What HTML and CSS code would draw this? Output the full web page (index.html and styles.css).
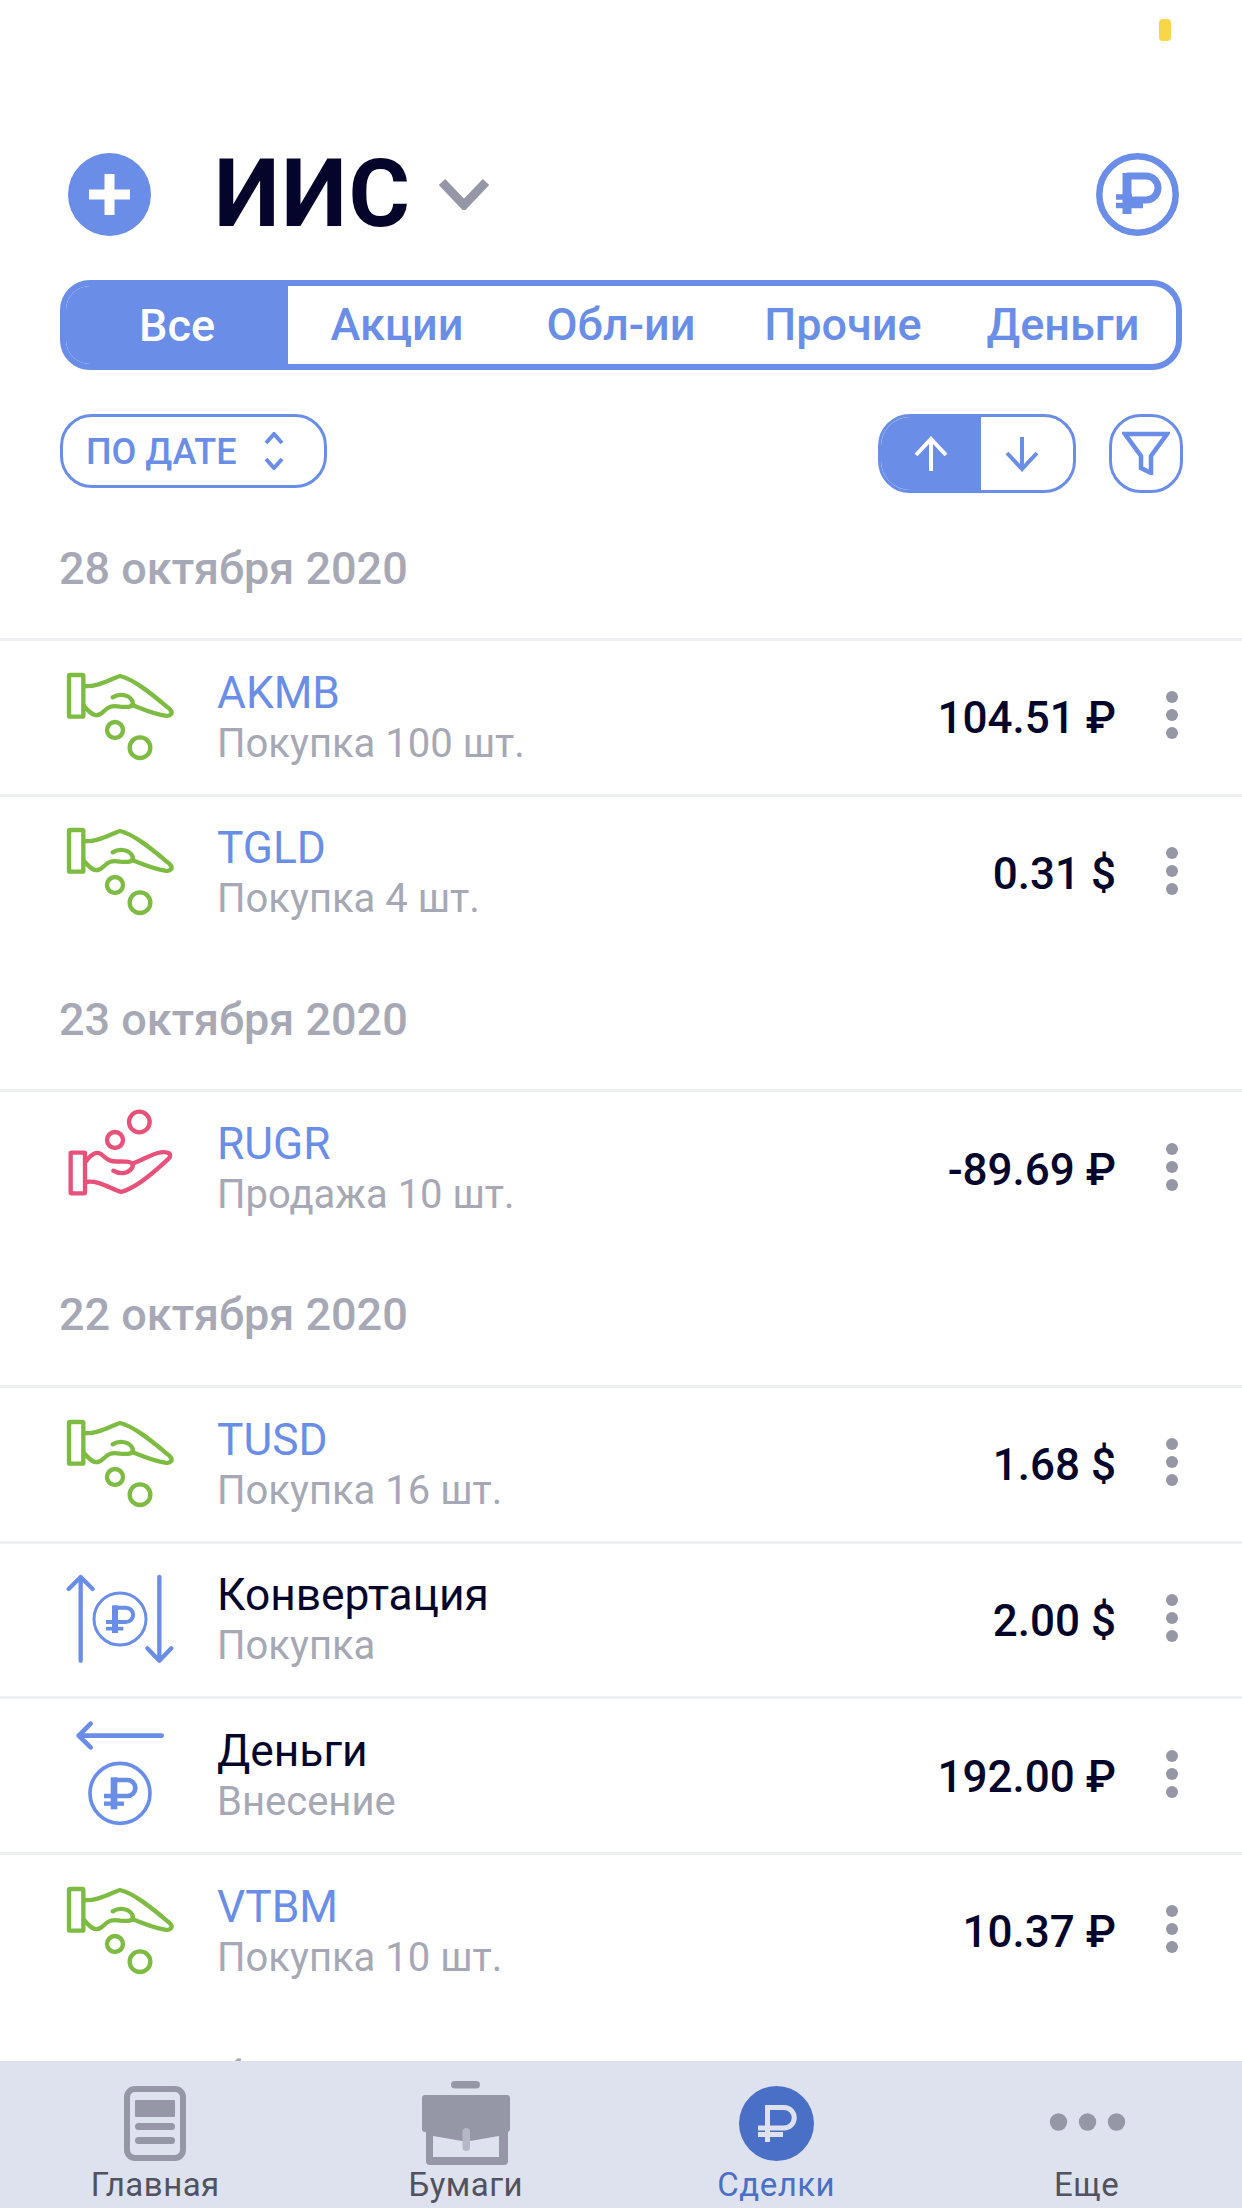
FILE: index.html
```html
<!DOCTYPE html>
<html lang="ru">
<head>
<meta charset="utf-8">
<title>ИИС</title>
<link rel="stylesheet" href="styles.css">
</head>
<body>
<svg class="defs" width="0" height="0" aria-hidden="true">
  <symbol id="hand-buy" viewBox="0 0 480 468">
    <g fill="none" stroke-width="13" stroke-linecap="round" stroke-linejoin="round" transform="translate(0,33)">
      <rect x="87" y="75" width="43" height="125" rx="3"/>
      <path d="M132 108C170 112 205 90 240 78C285 88 350 145 388 176C402 190 392 200 375 197C340 192 310 178 278 166"/>
      <path d="M218 142C240 128 270 135 278 155C282 172 262 172 240 170C215 166 205 170 190 185C170 205 155 195 132 168"/>
      <circle cx="225" cy="240" r="24"/>
      <circle cx="300" cy="293" r="31"/>
    </g>
  </symbol>
  <symbol id="hand-sell" viewBox="0 0 480 468">
    <g fill="none" stroke-width="13" stroke-linecap="round" stroke-linejoin="round">
      <rect x="92" y="188" width="43" height="122" rx="3"/>
      <path d="M138 276C175 270 210 295 243 306C285 296 350 240 386 206C398 192 385 184 362 187C340 190 310 208 280 220"/>
      <path d="M220 242C240 255 270 250 278 230C280 214 262 214 240 214C215 216 205 212 190 198C172 180 155 190 138 214"/>
      <circle cx="225" cy="150" r="24"/>
      <circle cx="298" cy="96" r="31"/>
    </g>
  </symbol>
  <symbol id="convert" viewBox="0 0 480 468">
    <g fill="none" stroke-linecap="round" stroke-linejoin="round" transform="translate(0,54)">
      <path stroke-width="13" d="M122 305V54M86 90L122 54L158 90M358 54V305M322 268L358 305L394 268"/>
      <circle cx="240" cy="180" r="78" stroke-width="9"/>
      <g stroke-linecap="butt" stroke-linejoin="miter">
        <path stroke-width="18" d="M225 222V139"/>
        <path stroke-width="12" d="M225 146H258A21 21 0 0 1 258 189H198"/>
        <path stroke-width="11" d="M198 209H250"/>
      </g>
    </g>
  </symbol>
  <symbol id="money" viewBox="0 0 480 468">
    <g fill="none" stroke-linecap="round" stroke-linejoin="round" transform="translate(0,-411)">
      <path stroke-width="14" d="M365 527H116M152 491L116 527L152 562"/>
      <circle cx="240" cy="700" r="90" stroke-width="11"/>
      <g stroke-linecap="butt" stroke-linejoin="miter">
        <path stroke-width="20" d="M222 748V652"/>
        <path stroke-width="14" d="M222 660H262A24 24 0 0 1 262 708H192"/>
        <path stroke-width="13" d="M192 731H252"/>
      </g>
    </g>
  </symbol>
</svg>

<div class="screen">
  <span class="status-dot"></span>
  <main class="content">
    <header class="header">
      <svg class="head-icon" viewBox="0 0 83 83">
        <circle class="fill-blue" cx="41.5" cy="41.5" r="41.5"/>
        <path class="plus" d="M41.5 21V62M21 41.5H62"/>
      </svg>
      <h1 class="title">ИИС</h1>
      <svg class="title-chevron" viewBox="0 0 50 32"><path d="M3 4L25 27L47 4"/></svg>
      <svg class="head-icon head-right" viewBox="0 0 83 83">
        <circle class="ring" cx="41.5" cy="41.5" r="38.2"/>
        <path class="rub-stem" d="M31 61V20"/>
        <path class="rub-bowl" d="M31 23H50A12 12 0 0 1 50 47H31"/>
        <path class="rub-bars" d="M20 44H36M20 52.5H47"/>
      </svg>
    </header>

    <nav class="tabs">
      <span class="tab tab-active">Все</span>
      <span class="tab">Акции</span>
      <span class="tab">Обл-ии</span>
      <span class="tab">Прочие</span>
      <span class="tab">Деньги</span>
    </nav>

    <div class="toolbar">
      <div class="sort-pill">
        <span class="sort-label">ПО ДАТЕ</span>
        <svg class="sort-icon" viewBox="0 0 20 38"><path d="M2 11L10 2L18 11M2 27L10 36L18 27"/></svg>
      </div>
      <div class="toggle">
        <span class="toggle-seg toggle-on">
          <svg class="arrow" viewBox="0 0 36 36"><path d="M18 35V3M3 19L18 3L33 19"/></svg>
        </span>
        <span class="toggle-seg">
          <svg class="arrow" viewBox="0 0 36 36"><path d="M18 1V33M3 17L18 33L33 17"/></svg>
        </span>
      </div>
      <div class="filter">
        <svg class="filter-icon" viewBox="0 0 48 44"><path d="M3 3H45L29 25V42L19 37V25Z"/></svg>
      </div>
    </div>

    <section>
      <h2 class="date">28 октября 2020</h2>
      <div class="row">
        <svg class="row-icon green"><use href="#hand-buy"/></svg>
        <div class="row-text"><div class="ticker">AKMB</div><div class="sub">Покупка 100 шт.</div></div>
        <div class="amount">104.51 ₽</div>
        <div class="more"><i></i><i></i><i></i></div>
      </div>
      <div class="row">
        <svg class="row-icon green"><use href="#hand-buy"/></svg>
        <div class="row-text"><div class="ticker">TGLD</div><div class="sub">Покупка 4 шт.</div></div>
        <div class="amount">0.31 $</div>
        <div class="more"><i></i><i></i><i></i></div>
      </div>
    </section>

    <section>
      <h2 class="date">23 октября 2020</h2>
      <div class="row">
        <svg class="row-icon pink"><use href="#hand-sell"/></svg>
        <div class="row-text"><div class="ticker">RUGR</div><div class="sub">Продажа 10 шт.</div></div>
        <div class="amount">-89.69 ₽</div>
        <div class="more"><i></i><i></i><i></i></div>
      </div>
    </section>

    <section>
      <h2 class="date">22 октября 2020</h2>
      <div class="row">
        <svg class="row-icon green"><use href="#hand-buy"/></svg>
        <div class="row-text"><div class="ticker">TUSD</div><div class="sub">Покупка 16 шт.</div></div>
        <div class="amount">1.68 $</div>
        <div class="more"><i></i><i></i><i></i></div>
      </div>
      <div class="row">
        <svg class="row-icon blue"><use href="#convert"/></svg>
        <div class="row-text"><div class="ticker ticker-dark">Конвертация</div><div class="sub">Покупка</div></div>
        <div class="amount">2.00 $</div>
        <div class="more"><i></i><i></i><i></i></div>
      </div>
      <div class="row">
        <svg class="row-icon blue"><use href="#money"/></svg>
        <div class="row-text"><div class="ticker ticker-dark">Деньги</div><div class="sub">Внесение</div></div>
        <div class="amount">192.00 ₽</div>
        <div class="more"><i></i><i></i><i></i></div>
      </div>
      <div class="row">
        <svg class="row-icon green"><use href="#hand-buy"/></svg>
        <div class="row-text"><div class="ticker">VTBM</div><div class="sub">Покупка 10 шт.</div></div>
        <div class="amount">10.37 ₽</div>
        <div class="more"><i></i><i></i><i></i></div>
      </div>
    </section>

    <section>
      <h2 class="date">21 октября 2020</h2>
    </section>
  </main>

  <footer class="bottom-nav">
    <div class="nav-item">
      <svg class="nav-icon" viewBox="0 0 100 85">
        <rect class="nav-outline" x="22" y="8" width="56" height="69" rx="8"/>
        <rect class="nav-fill" x="30" y="19" width="40" height="17" rx="1"/>
        <rect class="nav-fill" x="30" y="42" width="40" height="7" rx="3.5"/>
        <rect class="nav-fill" x="30" y="56" width="40" height="7" rx="3.5"/>
      </svg>
      <span class="nav-label">Главная</span>
    </div>
    <div class="nav-item">
      <svg class="nav-icon" viewBox="0 0 100 85">
        <rect class="nav-fill" x="35" y="0" width="29" height="7.5" rx="3.75"/>
        <rect class="nav-fill" x="10" y="30" width="82" height="54" rx="4"/>
        <path class="nav-bg" d="M17 55L46 60V76H17ZM83 55L54 60V76H83ZM46 60H54V76H46Z"/>
        <path class="nav-fill" d="M9 14H91A3 3 0 0 1 94 17V48A3 3 0 0 1 91 51L54 58H46L9 51A3 3 0 0 1 6 48V17A3 3 0 0 1 9 14Z"/>
        <rect class="nav-clasp" x="46.5" y="47" width="7.5" height="23" rx="3.75"/>
      </svg>
      <span class="nav-label">Бумаги</span>
    </div>
    <div class="nav-item nav-item-active">
      <svg class="nav-icon" viewBox="0 0 100 85">
        <circle class="nav-active-fill" cx="50.5" cy="42.5" r="37.5"/>
        <path class="nav-rub" d="M41.5 61V26.5H58A10.25 10.25 0 0 1 58 47H32M32 53.5H57"/>
      </svg>
      <span class="nav-label">Сделки</span>
    </div>
    <div class="nav-item">
      <svg class="nav-icon" viewBox="0 0 100 85">
        <circle class="nav-fill" cx="21.5" cy="41" r="8.7"/>
        <circle class="nav-fill" cx="50.5" cy="41" r="8.7"/>
        <circle class="nav-fill" cx="79.5" cy="41" r="8.7"/>
      </svg>
      <span class="nav-label">Еще</span>
    </div>
  </footer>
</div>
</body>
</html>
```

FILE: styles.css
```css
* { box-sizing: border-box; }

html, body {
  margin: 0;
  padding: 0;
  background: #fff;
}

body {
  font-family: Roboto, "Noto Sans", sans-serif;
  color: #05052b;
}

.defs { position: absolute; }

.screen {
  position: relative;
  width: 1242px;
  height: 2208px;
  display: flex;
  flex-direction: column;
  overflow: hidden;
}

.status-dot {
  position: absolute;
  left: 1159px;
  top: 19px;
  width: 12px;
  height: 22px;
  border-radius: 4px;
  background: #f7d749;
}

.content {
  flex: 1;
  min-height: 0;
  overflow: hidden;
  padding-top: 152px;
}

/* header */
.header {
  display: flex;
  align-items: center;
  height: 84px;
  padding: 0 63px 0 68px;
}

.head-icon { width: 83px; height: 83px; flex: none; }
.head-right { margin-left: auto; }
.fill-blue { fill: #6a8ee8; }
.plus { fill: none; stroke: #fff; stroke-width: 10; }
.ring { fill: none; stroke: #6a8ee8; stroke-width: 6.5; }
.rub-stem { fill: none; stroke: #6a8ee8; stroke-width: 9; }
.rub-bowl { fill: none; stroke: #6a8ee8; stroke-width: 7; }
.rub-bars { fill: none; stroke: #6a8ee8; stroke-width: 5.5; }

.title {
  margin: 0 0 0 63px;
  font-size: 94px;
  line-height: 84px;
  font-weight: 700;
  letter-spacing: 1.5px;
  color: #05052b;
}

.title-chevron {
  width: 50px;
  height: 32px;
  margin-left: 27px;
  flex: none;
}
.title-chevron path { fill: none; stroke: #9697a6; stroke-width: 9; }

/* tabs */
.tabs {
  display: grid;
  grid-template-columns: 222px 218px 230px 214px 226px;
  height: 90px;
  margin: 44px 60px 0;
  width: 1122px;
  border: 6px solid #6a8ee8;
  border-radius: 30px;
  overflow: hidden;
  font-size: 45px;
  font-weight: 500;
  color: #6a8ee8;
}

.tab {
  display: flex;
  align-items: center;
  justify-content: center;
  margin-top: -2px;
}

.tab-active {
  margin: -6px 0 -6px -6px;
  background: #6a8ee8;
  color: #fff;
  padding-top: 0;
  padding-left: 6px;
}

/* toolbar */
.toolbar {
  display: flex;
  align-items: flex-start;
  height: 79px;
  margin-top: 44px;
  padding: 0 59px 0 60px;
}

.sort-pill {
  display: flex;
  align-items: center;
  width: 267px;
  height: 74px;
  padding: 2px 0 0 23px;
  border: 3px solid #6a8ee8;
  border-radius: 32px;
  color: #6a8ee8;
}

.sort-label {
  font-size: 36px;
  font-weight: 500;
  line-height: 1;
}

.sort-icon { width: 20px; height: 38px; margin: -2px 0 0 28px; }
.sort-icon path { fill: none; stroke: #6a8ee8; stroke-width: 4; }

.toggle {
  display: flex;
  width: 198px;
  height: 79px;
  margin-left: auto;
  border: 3px solid #6a8ee8;
  border-radius: 32px;
  overflow: hidden;
}

.toggle-seg {
  display: flex;
  align-items: center;
  justify-content: center;
  width: 92px;
  height: 100%;
  padding-right: 10px;
}

.toggle-on {
  width: 100px;
  padding-right: 0;
  background: #6a8ee8;
  color: #fff;
}

.arrow { width: 36px; height: 36px; }
.arrow path { fill: none; stroke: #6a8ee8; stroke-width: 4; }
.toggle-on .arrow path { stroke: #fff; }

.filter {
  display: flex;
  align-items: center;
  justify-content: center;
  width: 74px;
  height: 79px;
  margin-left: 33px;
  border: 3px solid #6a8ee8;
  border-radius: 32px;
}

.filter-icon { width: 48px; height: 44px; margin-top: -1px; }
.filter-icon path { fill: none; stroke: #6a8ee8; stroke-width: 4.5; }

/* list */
.date {
  display: flex;
  align-items: center;
  height: 140px;
  margin: 0;
  padding: 0 0 0 59px;
  font-size: 45px;
  font-weight: 500;
  color: #a6a8b5;
}

.toolbar + section { margin-top: 5px; }

.row {
  display: flex;
  align-items: center;
  height: 155.67px;
  padding: 0 62px 0 40px;
  border-top: 3px solid #eeeff2;
}

.row-icon {
  width: 160px;
  height: 156px;
  margin-top: -1px;
  flex: none;
}

.green { stroke: #7dbb42; }
.pink { stroke: #e8517a; }
.blue { stroke: #6a8ee8; }

.row-text {
  margin: 2px 0 0 17px;
  flex: 1;
  min-width: 0;
}

.ticker {
  font-size: 44.3px;
  line-height: 50px;
  color: #6a8ee8;
}

.ticker-dark { color: #05052b; }

.sub {
  font-size: 40px;
  line-height: 51px;
  color: #a6a8b5;
}

.amount {
  margin-top: 2px;
  font-size: 44px;
  font-weight: 500;
  color: #05052b;
  white-space: nowrap;
}

.more {
  display: flex;
  flex-direction: column;
  gap: 6px;
  margin: -4px 2px 0 50px;
  width: 12px;
}

.more i {
  display: block;
  width: 12px;
  height: 12px;
  border-radius: 50%;
  background: #9697a6;
}

/* bottom navigation */
.bottom-nav {
  display: grid;
  grid-template-columns: repeat(4, 1fr);
  height: 147px;
  flex: none;
  padding-top: 20px;
  background: #dee2ee;
  overflow: hidden;
}

.nav-item {
  display: flex;
  flex-direction: column;
  align-items: center;
}

.nav-icon { width: 100px; height: 85px; flex: none; }
.nav-outline { fill: none; stroke: #9697a6; stroke-width: 6; }
.nav-fill { fill: #9697a6; }
.nav-bg { fill: #dee2ee; }
.nav-clasp { fill: #b4b7c6; }
.nav-active-fill { fill: #4a6fc7; }
.nav-rub { fill: none; stroke: #dee2ee; stroke-width: 5; }

.nav-label {
  font-size: 33px;
  line-height: 38px;
  letter-spacing: 0.5px;
  color: #50535f;
}

.nav-item-active .nav-label { color: #4a6fc7; }
```
